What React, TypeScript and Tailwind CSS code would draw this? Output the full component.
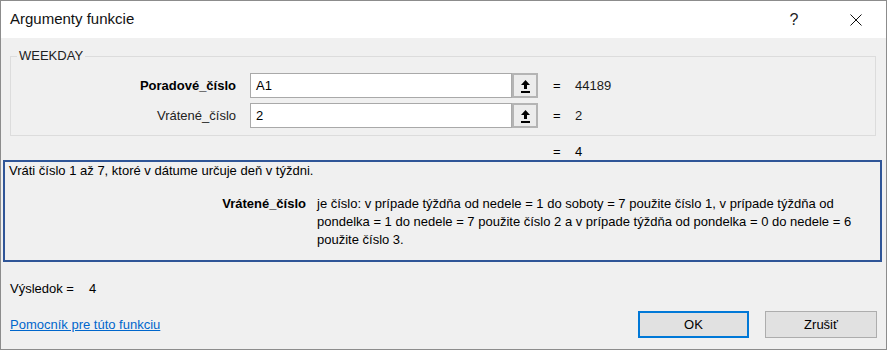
import React from "react";

const RefButton = () => (
  <div className="w-[26px] h-[25px] border-2 border-[#b4b4b4] bg-[#ececec] flex items-center justify-center">
    <svg width="11" height="14" viewBox="0 0 11 14">
      <path d="M5.5 1 L10 6 L7 6 L7 10 L4 10 L4 6 L1 6 Z" fill="#000" />
      <rect x="1" y="12" width="9" height="2" fill="#000" />
    </svg>
  </div>
);

const ArgRow = ({
  label,
  value,
  result,
  bold,
}: {
  label: string;
  value: string;
  result: string;
  bold?: boolean;
}) => (
  <div className="flex items-center h-[25px]">
    <div
      className={
        "w-[225px] text-right text-[13px] " + (bold ? "font-bold" : "text-[#222]")
      }
    >
      {label}
    </div>
    <div className="ml-[14px] w-[262px] h-[25px] bg-white border border-[#a9a9a9] flex items-center px-[5px] text-[13px]">
      {value}
    </div>
    <RefButton />
    <div className="ml-[15px] w-[22px] text-[13px]">=</div>
    <div className="text-[13px] text-[#1a1a1a]">{result}</div>
  </div>
);

export default function App() {
  return (
    <div className="w-[887px] h-[350px] bg-[#f0f0f0] border border-[#8c8c8c] flex flex-col font-['Liberation_Sans',Arial,sans-serif] text-black overflow-hidden">
      {/* Title bar */}
      <div className="h-[37px] bg-white flex items-center shrink-0">
        <div className="pl-[9px] text-[15px] text-[#111]">Argumenty funkcie</div>
        <div className="ml-auto w-[16px] text-center text-[16px] text-[#222] mr-[48px]">?</div>
        <svg width="12" height="12" viewBox="0 0 12 12" className="mr-[24px]">
          <path d="M0.5 0.5 L11.5 11.5 M11.5 0.5 L0.5 11.5" stroke="#111" strokeWidth="1" />
        </svg>
      </div>

      {/* Argument group */}
      <fieldset className="mx-[9px] mt-[10px] w-[866px] border border-[#dcdcdc] pb-[7px]">
        <legend className="ml-[6px] px-[2px] text-[13px] leading-[16px] text-[#222]">WEEKDAY</legend>
        <div className="mt-[9px] flex flex-col gap-[5px]">
          <ArgRow label="Poradové_číslo" value="A1" result="44189" bold />
          <ArgRow label="Vrátené_číslo" value="2" result="2" />
        </div>
      </fieldset>

      <div className="flex items-center h-[16px] mt-[8px] text-[13px]">
        <div className="ml-[552px] w-[22px]">=</div>
        <div>4</div>
      </div>

      {/* Description */}
      <div className="ml-[2px] mr-[4px] h-[102px] border-2 border-[#2f5597] pl-[4px] text-[13px] leading-[18px]">
        <div>Vráti číslo 1 až 7, ktoré v dátume určuje deň v týždni.</div>
        <div className="flex mt-[15px]">
          <div className="w-[297px] text-right font-bold shrink-0">Vrátené_číslo</div>
          <div className="ml-[11px] w-[545px]">
            je číslo: v prípade týždňa od nedele = 1 do soboty = 7 použite číslo 1, v prípade týždňa od
            pondelka = 1 do nedele = 7 použite číslo 2 a v prípade týždňa od pondelka = 0 do nedele = 6
            použite číslo 3.
          </div>
        </div>
      </div>

      {/* Result */}
      <div className="flex items-center h-[18px] mt-[18px] pl-[9px] text-[13px]">
        <div className="w-[79px]">Výsledok =</div>
        <div>4</div>
      </div>

      {/* Footer */}
      <div className="flex items-center mt-[13px] pl-[9px]">
        <a href="#" className="text-[13px] text-[#0066cc] underline">
          Pomocník pre túto funkciu
        </a>
        <button className="ml-auto w-[111px] h-[27px] bg-[#e1e1e1] border-2 border-[#0078d7] text-[13px]">
          OK
        </button>
        <button className="ml-[16px] mr-[9px] w-[112px] h-[27px] bg-[#e1e1e1] border border-[#adadad] text-[13px]">
          Zrušiť
        </button>
      </div>
    </div>
  );
}
